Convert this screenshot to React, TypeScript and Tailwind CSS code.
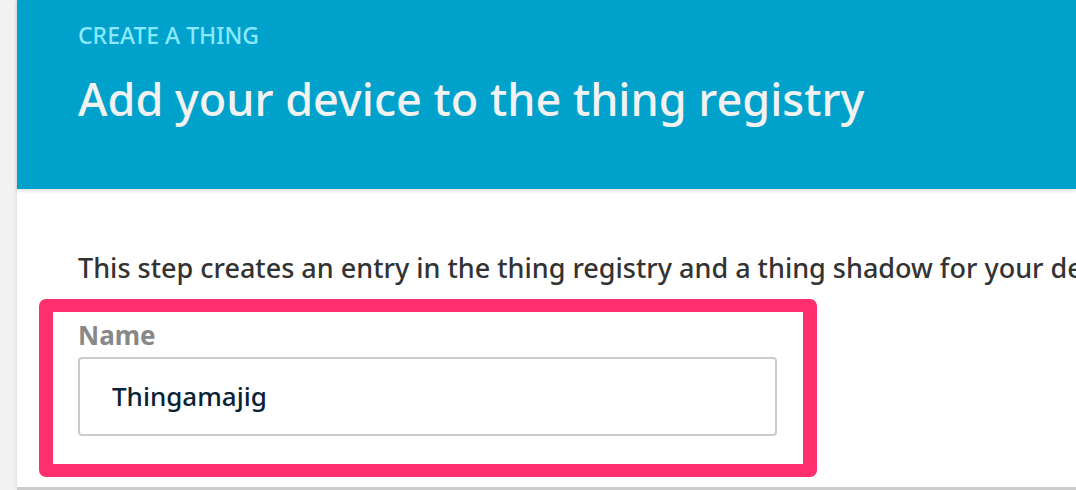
export default function App() {
  const font = { fontFamily: '"Noto Sans", "Open Sans", sans-serif' };
  return (
    <div className="w-[1076px] h-[490px] overflow-hidden bg-[#f2f2f2] flex" style={font}>
      <div className="w-[17px] shrink-0" />
      <div className="flex-1 min-w-0 flex flex-col bg-white shadow-[0_0_4px_rgba(0,0,0,0.12)]">
        <div className="h-[189px] shrink-0 bg-[#00a2cb] pl-[61px] pt-[18px] shadow-[0_2px_4px_rgba(0,0,0,0.12)] relative z-10">
          <div className="text-[23px] leading-[34px] font-medium text-[#8ae8ff] whitespace-nowrap">CREATE A THING</div>
          <div className="mt-[17px] text-[45px] leading-[60px] font-medium text-[#f2f2f2] whitespace-nowrap">Add your device to the thing registry</div>
        </div>
        <div className="flex-1 flex flex-col border-b-[3px] border-[#cccccc] overflow-hidden">
          <div className="pl-[61px] pt-[61px] text-[27px] leading-[36px] font-medium text-[#333333] whitespace-nowrap">
            This step creates an entry in the thing registry and a thing shadow for your device.
          </div>
          <div className="ml-[22px] mt-[13px] w-[778px] h-[178px] border-[13px] border-x-[14px] border-[#ff2e6c] rounded-[7px] pl-[25px] pt-[6px]">
            <div className="text-[26px] leading-[34px] font-bold text-[#888888]">Name</div>
            <div className="mt-[5px] w-[699px] h-[79px] border-2 border-[#cccccc] rounded-[4px] flex items-center pl-[32px] text-[26px] font-medium text-[#0a2235]">
              Thingamajig
            </div>
          </div>
        </div>
      </div>
    </div>
  );
}
